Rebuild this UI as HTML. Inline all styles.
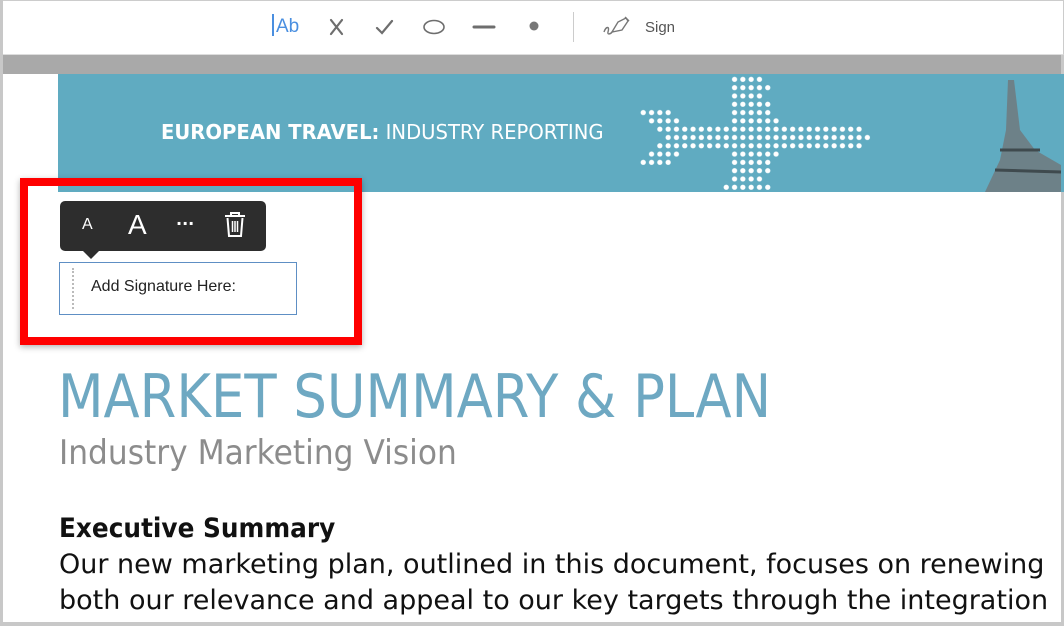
<!DOCTYPE html>
<html><head><meta charset="utf-8"><style>
*{margin:0;padding:0;box-sizing:border-box}
body{width:1064px;height:626px;overflow:hidden;background:#fff;position:relative;font-family:"DejaVu Sans",sans-serif}
.abs{position:absolute}
.top{left:0;top:0;width:1064px;height:55px;background:#fff;border:1px solid #ccc;border-bottom:1px solid #ddd}
.gray{left:0;top:55px;width:1064px;height:19px;background:#a9a9a9}
.side{top:55px;width:4px;height:571px;background:#c8c8c8}
.banner{left:58px;top:74px;width:1006px;height:118px;background:#60abc1}
.btitle{left:161px;top:120px;color:#fff;font-family:"DejaVu Sans",sans-serif;font-size:20px;white-space:nowrap;transform:scaleX(0.98);transform-origin:0 0}
.h1{left:58px;top:362px;font-size:60px;color:#6ea8c2;white-space:nowrap;transform:scaleX(0.88);transform-origin:0 0}
.h2{left:59px;top:433px;font-size:34px;color:#8c8c8c;white-space:nowrap;transform:scaleX(0.92);transform-origin:0 0}
.h3{left:59px;top:513px;font-size:27px;font-weight:bold;color:#111;white-space:nowrap;transform:scaleX(0.918);transform-origin:0 0}
.p{left:59px;font-size:27px;color:#111;white-space:nowrap;transform:scaleX(1.0);transform-origin:0 0}
</style></head><body>
<div class="abs top"></div>
<div class="abs" style="left:272px;top:14px;font-family:'Liberation Sans',sans-serif;font-size:19px;color:#4a8fe0"><span style="display:inline-block;width:2px;height:22px;background:#4a8fe0;vertical-align:-4px;margin-right:2px"></span>Ab</div>
<svg class="abs" style="left:320px;top:10px" width="380" height="34">
<g stroke="#6e6e6e" stroke-width="2.2" fill="none" stroke-linecap="round">
<path d="M11 10 L22 24 M22 10 L11 24"/>
<path d="M57 18 L62 23 L72 11"/>
<ellipse cx="114" cy="17" rx="10" ry="6.5" stroke-width="1.6"/>
<path d="M154 17 H174" stroke-width="3"/>
</g>
<circle cx="214" cy="16" r="4.5" fill="#777"/>
<rect x="253" y="2" width="1" height="30" fill="#ccc"/>
<g stroke="#777" stroke-width="1.4" fill="none"><path d="M284 22 c2-6 6-6 4 0 c-1 3 3 2 4 0"/><path d="M292 22 L298 12 L306 8 L308 11 L302 20 Z"/><path d="M305 7 l4 4"/></g>
<text x="325" y="22" font-family="Liberation Sans" font-size="15" fill="#555">Sign</text>
</svg>
<div class="abs gray"></div>
<div class="abs side" style="left:0;top:0;height:626px;width:3px"></div>
<div class="abs side" style="left:1061px;width:3px"></div>
<div class="abs banner"></div>
<div class="abs btitle"><b>EUROPEAN TRAVEL:</b> INDUSTRY REPORTING</div>
<svg class="abs" style="left:0;top:0" width="1064" height="200">
<defs><pattern id="d" x="0" y="0.5" width="8.3" height="8.3" patternUnits="userSpaceOnUse"><circle cx="4.15" cy="4.15" r="2.6" fill="#fff"/></pattern></defs>
<g fill="url(#d)">
<rect x="730" y="74" width="34" height="8.3"/>
<rect x="730" y="82.3" width="42" height="8.3"/>
<rect x="730" y="90.6" width="34" height="8.3"/>
<rect x="730" y="98.9" width="42" height="8.3"/>
<rect x="730" y="107.2" width="42" height="8.3"/>
<rect x="730" y="115.5" width="50" height="8.3"/>
<rect x="639" y="107.2" width="34" height="8.3"/>
<rect x="647" y="115.5" width="34" height="8.3"/>
<rect x="655" y="123.8" width="208" height="8.3"/>
<rect x="663" y="132.1" width="208" height="8.3"/>
<rect x="655" y="140.4" width="208" height="8.3"/>
<rect x="647" y="148.7" width="34" height="8.3"/>
<rect x="730" y="148.7" width="50" height="8.3"/>
<rect x="639" y="157" width="34" height="8.3"/>
<rect x="730" y="157" width="42" height="8.3"/>
<rect x="730" y="165.3" width="42" height="8.3"/>
<rect x="730" y="173.6" width="34" height="8.3"/>
<rect x="722" y="181.9" width="50" height="8.3"/>
</g>
<path d="M1008 80 L1014 80 L1020 130 L1035 150 L1061 165 L1061 192 L985 192 L1000 160 L1006 130 Z" fill="#6f7c82" opacity="0.9"/>
<path d="M1000 150 L1040 150 M995 170 L1061 172" stroke="#3f4a4e" stroke-width="3"/>
</svg>
<div class="abs" style="left:20px;top:178px;width:342px;height:167px;border:8px solid #f00;box-shadow:0 2px 6px rgba(0,0,0,.3)"></div>
<div class="abs" style="left:60px;top:201px;width:206px;height:50px;background:#2d2d2d;border-radius:5px"></div>
<div class="abs" style="left:83px;width:0;height:0;border-left:8px solid transparent;border-right:8px solid transparent;border-top:8px solid #2d2d2d;top:251px"></div>
<div class="abs" style="left:82px;top:216px;color:#fff;font-family:'Liberation Sans',sans-serif;font-size:16px">A</div>
<div class="abs" style="left:128px;top:209px;color:#fff;font-family:'Liberation Sans',sans-serif;font-size:28px">A</div>
<div class="abs" style="left:176px;top:214px;color:#fff;font-size:16px;font-weight:bold">···</div>
<svg class="abs" style="left:223px;top:212px" width="24" height="26"><g stroke="#fff" stroke-width="2" fill="none"><path d="M2 4 H22 M8 4 V1 H16 V4"/><path d="M4.5 6 L6 24 H18 L19.5 6"/><path d="M9.5 9 V20 M12 9 V20 M14.5 9 V20" stroke-width="1.5"/></g></svg>
<div class="abs" style="left:59px;top:262px;width:238px;height:53px;border:1px solid #5e8fc4"></div>
<div class="abs" style="left:72px;top:268px;height:41px;border-left:2px dotted #bbb"></div>
<div class="abs" style="left:91px;top:278px;font-family:'Liberation Sans',sans-serif;font-size:16px;color:#222">Add Signature Here:</div>
<div class="abs h1">MARKET SUMMARY &amp; PLAN</div>
<div class="abs h2">Industry Marketing Vision</div>
<div class="abs h3">Executive Summary</div>
<div class="abs p" style="top:549px">Our new marketing plan, outlined in this document, focuses on renewing</div>
<div class="abs p" style="top:585px">both our relevance and appeal to our key targets through the integration</div>
<div class="abs" style="left:0;top:622px;width:1064px;height:4px;background:#c8c8c8"></div>
</body></html>
